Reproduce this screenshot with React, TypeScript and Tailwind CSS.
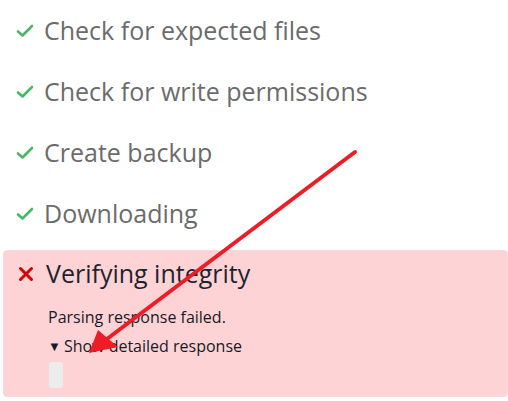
import React from "react";

const Check = () => (
  <svg width="18" height="14" viewBox="0 0 18 14" className="shrink-0">
    <path d="M2 7.5 L6.5 11.5 L16 2" fill="none" stroke="#46b866" strokeWidth="2.6" strokeLinecap="round" strokeLinejoin="round" />
  </svg>
);

const Cross = () => (
  <svg width="16" height="16" viewBox="0 0 16 16" className="shrink-0">
    <path d="M2.5 2.5 L13.5 13.5 M13.5 2.5 L2.5 13.5" stroke="#d40000" strokeWidth="3" strokeLinecap="round" />
  </svg>
);

const steps = ["Check for expected files", "Check for write permissions", "Create backup", "Downloading"];

export default function App() {
  return (
    <div className="relative w-[508px] h-[401px] bg-white overflow-hidden" style={{ fontFamily: '"Open Sans", sans-serif' }}>
      <div className="flex flex-col">
        {steps.map((s) => (
          <div key={s} className="flex items-center h-[61px] pl-[16px] gap-[10px] text-[25px] text-[#6b6b6b]">
            <Check />
            <span>{s}</span>
          </div>
        ))}
      </div>
      <div className="ml-[3px] mt-[6px] h-[147px] rounded-[4px] bg-[#fdd3d5] border border-[#fbd9da] pl-[14px] pt-[8px]">
        <div className="flex items-center gap-[12px] text-[25px] text-[#1f2330] h-[30px]">
          <Cross />
          <span>Verifying integrity</span>
        </div>
        <div className="pl-[30px] mt-[18px] text-[16px] leading-[20px] text-[#161a28]">
          <div>Parsing response failed.</div>
          <div className="mt-[9px] flex items-center gap-[3px]">
            <span className="text-[13px] leading-[20px]">▼</span>
            <span>Show detailed response</span>
          </div>
          <div className="mt-[6px] w-[14px] h-[26px] rounded-[3px] bg-[#ececec] ml-[1px]" />
        </div>
      </div>
      <svg className="absolute left-0 top-0 pointer-events-none" width="508" height="401">
        <line x1="355" y1="152" x2="95" y2="348" stroke="#ee1c25" strokeWidth="4" strokeLinecap="round" />
        <path d="M89 353 L98 330 L118 347 Z" fill="#ee1c25" />
      </svg>
    </div>
  );
}
